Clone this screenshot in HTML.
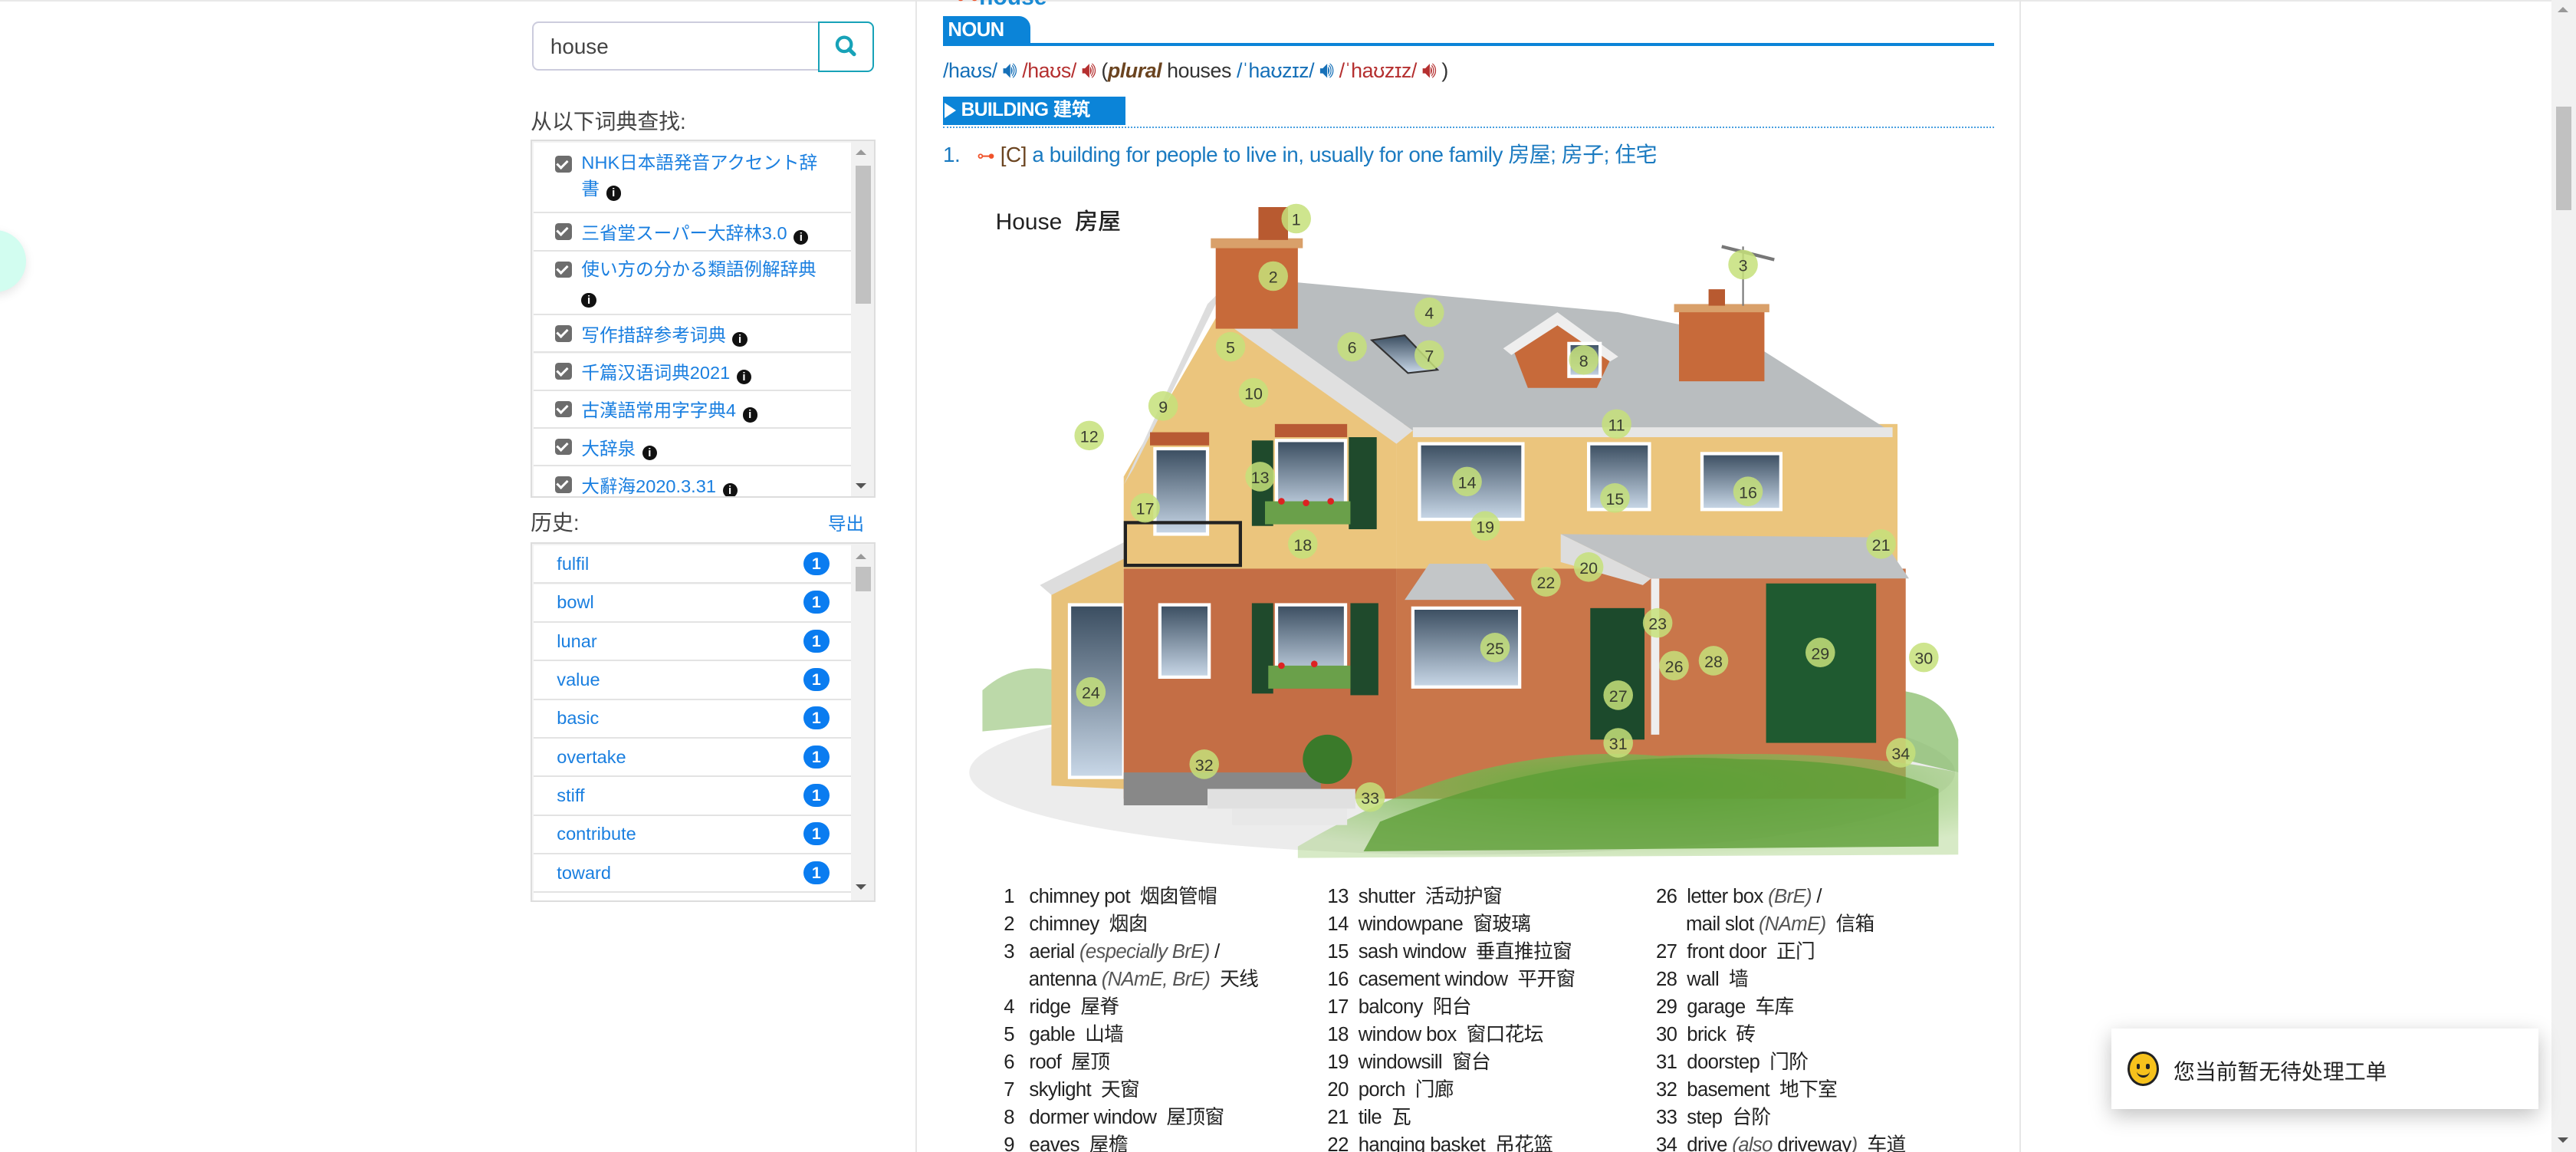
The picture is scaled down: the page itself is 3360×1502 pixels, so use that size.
<!DOCTYPE html>
<html><head><meta charset="utf-8">
<style>
html,body{margin:0;padding:0;background:#fff;overflow:hidden}
body{zoom:2.142857;width:1568px;height:701px;position:relative;font-family:"Liberation Sans","Noto Sans CJK SC",sans-serif;color:#333}
.a{position:absolute}
.box{position:absolute;border:1px solid #ddd;background:#f3f3f3}
.row{position:absolute;left:1px;width:193px;background:#fff;border-bottom:1px solid #e3e3e3;font-size:11px;color:#1a7fe0}
.cb{position:absolute;left:13px;width:10px;height:10px;background:#6d6d6d;border-radius:2px}
.cb:after{content:"";position:absolute;left:2.5px;top:1px;width:3px;height:5px;border:solid #fff;border-width:0 1.6px 1.6px 0;transform:rotate(45deg)}
.info{display:inline-block;width:9px;height:9px;border-radius:50%;background:#111;color:#fff;font-size:7px;line-height:9px;text-align:center;font-weight:bold;vertical-align:-1px;margin-left:4px}
.badge{position:absolute;left:164px;width:16px;height:14px;border-radius:8px;background:#0a7cf0;color:#fff;font-size:10px;font-weight:bold;text-align:center;line-height:14px}
.sb{position:absolute;width:14px;background:#f1f1f1}
.leg{position:absolute;font-size:12px;color:#222;letter-spacing:-0.3px;white-space:nowrap;line-height:16.8px}
.leg i{color:#555}
.spk{font-size:14px}
</style></head><body>
<div class="a" style="left:0;top:0;width:1553px;height:1px;background:#e8e8e8"></div>
<div class="a" style="left:-22px;top:140px;width:38px;height:38px;border-radius:50%;background:#d2fdf0;box-shadow:0 2px 6px rgba(0,0,0,.1)"></div>

<div class="a" style="left:324px;top:13px;width:174px;height:30px;border:1px solid #ccd;border-right:none;border-radius:4px 0 0 4px;box-sizing:border-box"></div>
<div class="a" style="left:335px;top:21px;font-size:13px;color:#444">house</div>
<div class="a" style="left:498px;top:13px;width:34px;height:31px;border:1px solid #17a2b8;border-radius:0 4px 4px 0;box-sizing:border-box">
<svg width="32" height="29" viewBox="0 0 32 29"><circle cx="15" cy="13" r="4.3" fill="none" stroke="#17a2b8" stroke-width="2"/><line x1="18" y1="16" x2="21" y2="19" stroke="#17a2b8" stroke-width="2.4" stroke-linecap="round"/></svg></div>
<div class="a" style="left:323px;top:64px;font-size:13px;color:#444">从以下词典查找:</div>

<div class="box" style="left:323px;top:85px;width:208px;height:216px;overflow:hidden">
 <div class="row" style="top:1px;height:42px"><div class="cb" style="top:8px"></div><div class="a" style="left:29px;top:4px;line-height:16px;width:150px">NHK日本語発音アクセント辞<br>書<span class="info">i</span></div></div>
 <div class="row" style="top:44px;height:22px"><div class="cb" style="top:6px"></div><div class="a" style="left:29px;top:3px">三省堂スーパー大辞林3.0<span class="info">i</span></div></div>
 <div class="row" style="top:67px;height:38px"><div class="cb" style="top:6px"></div><div class="a" style="left:29px;top:3px;line-height:16px">使い方の分かる類語例解辞典<br><span class="info" style="margin-left:0">i</span></div></div>
 <div class="row" style="top:106px;height:22px"><div class="cb" style="top:6px"></div><div class="a" style="left:29px;top:3px">写作措辞参考词典<span class="info">i</span></div></div>
 <div class="row" style="top:129px;height:22px"><div class="cb" style="top:6px"></div><div class="a" style="left:29px;top:3px">千篇汉语词典2021<span class="info">i</span></div></div>
 <div class="row" style="top:152px;height:22px"><div class="cb" style="top:6px"></div><div class="a" style="left:29px;top:3px">古漢語常用字字典4<span class="info">i</span></div></div>
 <div class="row" style="top:175px;height:22px"><div class="cb" style="top:6px"></div><div class="a" style="left:29px;top:3px">大辞泉<span class="info">i</span></div></div>
 <div class="row" style="top:198px;height:22px"><div class="cb" style="top:6px"></div><div class="a" style="left:29px;top:3px">大辭海2020.3.31<span class="info">i</span></div></div>
 <div class="sb" style="left:194px;top:0;height:216px"></div>
 <div class="a" style="left:197px;top:15px;width:9px;height:84px;background:#c1c1c1"></div>
 <div class="a" style="left:197px;top:5px;width:0;height:0;border:3.5px solid transparent;border-bottom-color:#999;border-top:0"></div>
 <div class="a" style="left:197px;top:208px;width:0;height:0;border:3.5px solid transparent;border-top-color:#555;border-bottom:0"></div>
</div>

<div class="a" style="left:323px;top:308px;font-size:13px;color:#444">历史:</div>
<div class="a" style="left:504px;top:310px;font-size:11px;color:#1a7fe0">导出</div>
<div class="box" style="left:323px;top:330px;width:208px;height:217px;overflow:hidden">
 <div class="row" style="top:1px;height:22.5px"><div class="a" style="left:14px;top:5px">fulfil</div><div class="badge" style="top:4px">1</div></div>
 <div class="row" style="top:24.5px;height:22.5px"><div class="a" style="left:14px;top:5px">bowl</div><div class="badge" style="top:4px">1</div></div>
 <div class="row" style="top:48px;height:22.5px"><div class="a" style="left:14px;top:5px">lunar</div><div class="badge" style="top:4px">1</div></div>
 <div class="row" style="top:71.5px;height:22.5px"><div class="a" style="left:14px;top:5px">value</div><div class="badge" style="top:4px">1</div></div>
 <div class="row" style="top:95px;height:22.5px"><div class="a" style="left:14px;top:5px">basic</div><div class="badge" style="top:4px">1</div></div>
 <div class="row" style="top:118.5px;height:22.5px"><div class="a" style="left:14px;top:5px">overtake</div><div class="badge" style="top:4px">1</div></div>
 <div class="row" style="top:142px;height:22.5px"><div class="a" style="left:14px;top:5px">stiff</div><div class="badge" style="top:4px">1</div></div>
 <div class="row" style="top:165.5px;height:22.5px"><div class="a" style="left:14px;top:5px">contribute</div><div class="badge" style="top:4px">1</div></div>
 <div class="row" style="top:189px;height:22.5px"><div class="a" style="left:14px;top:5px">toward</div><div class="badge" style="top:4px">1</div></div>
 <div class="row" style="top:212.5px;height:22.5px"></div>
 <div class="sb" style="left:194px;top:0;height:217px"></div>
 <div class="a" style="left:197px;top:14px;width:9px;height:15px;background:#c1c1c1"></div>
 <div class="a" style="left:197px;top:6px;width:0;height:0;border:3.5px solid transparent;border-bottom-color:#999;border-top:0"></div>
 <div class="a" style="left:197px;top:207px;width:0;height:0;border:3.5px solid transparent;border-top-color:#555;border-bottom:0"></div>
</div>

<div class="a" style="left:557px;top:0;width:1px;height:701px;background:#e6e6e6"></div>
<div class="a" style="left:1229px;top:0;width:1px;height:701px;background:#e6e6e6"></div>

<div class="a" style="left:582px;top:-10px;font-size:14px;font-weight:bold;color:#1a8ad4"><span style="color:#f0522a">⊶</span>house</div>
<div class="a" style="left:574px;top:10px;width:53px;height:17px;background:#0b84d8;border-radius:0 7px 0 0;color:#fff;font-weight:bold;font-size:12px;line-height:17px;padding-left:3px;box-sizing:border-box;letter-spacing:-.3px">NOUN</div>
<div class="a" style="left:574px;top:26px;width:640px;height:2px;background:#0b84d8"></div>
<div class="a" style="left:574px;top:35px;font-size:12.5px;white-space:nowrap;letter-spacing:-.2px">
<span style="color:#1670b8">/haʊs/</span> <span class="spk" style="color:#1670b8">🔊︎</span> <span style="color:#b53030">/haʊs/</span> <span class="spk" style="color:#b53030">🔊︎</span> (<b style="color:#6b4420"><i>plural</i></b> houses <span style="color:#1670b8">/ˈhaʊzɪz/</span> <span class="spk" style="color:#1670b8">🔊︎</span> <span style="color:#b53030">/ˈhaʊzɪz/</span> <span class="spk" style="color:#b53030">🔊︎</span> )</div>
<div class="a" style="left:574px;top:59px;width:111px;height:17px;background:#0b84d8;color:#fff;font-weight:bold;font-size:11.5px;line-height:17px;white-space:nowrap;letter-spacing:-.3px"><span style="display:inline-block;width:0;height:0;border:5px solid transparent;border-left:7px solid #fff;border-right:0;vertical-align:-1px;margin:0 3px 0 1px"></span>BUILDING 建筑</div>
<div class="a" style="left:574px;top:77px;width:640px;height:0;border-top:1px dotted #4aa0e0"></div>
<div class="a" style="left:574px;top:84px;font-size:13px;color:#1a7ac0;white-space:nowrap;letter-spacing:-.2px">1.&nbsp;&nbsp; <span style="color:#f0522a;font-size:11px">⊶</span> <span style="color:#6b4420">[C]</span> a building for people to live in, usually for one family 房屋; 房子; 住宅</div>

<div class="a" style="left:606px;top:123px;font-size:14px;color:#222;font-weight:500">House&nbsp; 房屋</div>
<svg class="a" style="left:0;top:0" width="1568" height="701" viewBox="0 0 1568 701">
<defs><linearGradient id="gl" x1="0" y1="0" x2="0" y2="1"><stop offset="0" stop-color="#3a4d60"/><stop offset="1" stop-color="#c9d8e8"/></linearGradient>
<radialGradient id="gr" cx=".5" cy=".3" r=".7"><stop offset="0" stop-color="#5ea83a"/><stop offset="1" stop-color="#9bcb70" stop-opacity=".4"/></radialGradient></defs>
<ellipse cx="890" cy="470" rx="300" ry="50" fill="#ececec"/>
<path d="M598 420 Q620 400 650 410 L650 440 L598 445Z" fill="#8fc070" opacity=".6"/>
<path d="M1150 420 Q1185 420 1192 450 L1192 470 L1150 460Z" fill="#7fb860" opacity=".7"/>
<polygon points="640,355 684,335 684,480 640,478" fill="#e8c27a"/>
<polygon points="633,356 684,330 684,340 640,362" fill="#ddd"/>
<rect x="651" y="368" width="33" height="105" fill="url(#gl)" stroke="#fff" stroke-width="2"/>
<polygon points="684,290 745,185 850,262 850,348 684,348" fill="#ebc57d"/>
<rect x="684" y="346" width="166" height="140" fill="#c46e45"/>
<rect x="684" y="470" width="120" height="20" fill="#888"/>
<rect x="850" y="258" width="305" height="90" fill="#ebc57d"/>
<rect x="850" y="346" width="310" height="140" fill="#c9764a"/>
<polygon points="745,180 770,170 985,190 1060,205 1150,262 860,262" fill="#b9bdbf"/>
<polygon points="745,180 860,262 850,270 740,192" fill="#e0e0e0"/>
<polygon points="735,185 745,175 690,285 684,295" fill="#ddd"/>
<rect x="860" y="260" width="292" height="6" fill="#e6e6e6"/>
<rect x="740" y="148" width="50" height="52" fill="#c76a3a"/><rect x="737" y="145" width="56" height="6" fill="#d9a06a"/>
<rect x="766" y="126" width="18" height="20" fill="#b85a30"/>
<rect x="1022" y="188" width="52" height="44" fill="#c76a3a"/><rect x="1019" y="185" width="58" height="5" fill="#d9a06a"/>
<rect x="1040" y="176" width="10" height="10" fill="#b85a30"/>
<line x1="1061" y1="150" x2="1061" y2="186" stroke="#777"/><line x1="1048" y1="150" x2="1080" y2="158" stroke="#777" stroke-width="2"/>
<polygon points="920,210 948,193 982,215 972,236 930,236" fill="#c76a3a"/>
<polygon points="915,212 948,190 985,217 980,220 948,198 920,216" fill="#eee"/>
<rect x="955" y="209" width="19" height="20" fill="url(#gl)" stroke="#fff" stroke-width="2"/>
<polygon points="835,207 855,204 875,225 857,227" fill="url(#gl)" stroke="#333"/>
<rect x="703" y="273" width="32" height="52" fill="url(#gl)" stroke="#fff" stroke-width="2"/>
<rect x="777" y="268" width="42" height="44" fill="url(#gl)" stroke="#fff" stroke-width="2"/>
<rect x="762" y="268" width="13" height="52" fill="#1f4a2c"/><rect x="821" y="266" width="17" height="56" fill="#1f4a2c"/>
<rect x="864" y="270" width="63" height="46" fill="url(#gl)" stroke="#fff" stroke-width="2"/>
<rect x="967" y="270" width="37" height="40" fill="url(#gl)" stroke="#fff" stroke-width="2"/>
<rect x="1036" y="276" width="48" height="34" fill="url(#gl)" stroke="#fff" stroke-width="2"/>
<rect x="700" y="263" width="36" height="8" fill="#b85a34"/><rect x="776" y="258" width="44" height="8" fill="#b85a34"/>
<rect x="685" y="318" width="70" height="26" fill="none" stroke="#222" stroke-width="2"/>
<rect x="770" y="305" width="52" height="14" fill="#6aa04a"/><circle cx="780" cy="305" r="2" fill="#d22"/><circle cx="795" cy="306" r="2" fill="#d22"/><circle cx="810" cy="305" r="2" fill="#d22"/>
<polygon points="950,325 1145,327 1162,352 1005,352" fill="#bfc2c4"/>
<polygon points="950,325 1005,352 1000,356 950,342" fill="#ddd"/>
<polygon points="855,365 870,343 905,343 922,365" fill="#c3c6c8"/>
<rect x="706" y="368" width="30" height="44" fill="url(#gl)" stroke="#fff" stroke-width="2"/>
<rect x="777" y="368" width="42" height="45" fill="url(#gl)" stroke="#fff" stroke-width="2"/>
<rect x="762" y="367" width="13" height="55" fill="#1f4a2c"/><rect x="822" y="367" width="17" height="56" fill="#1f4a2c"/>
<rect x="772" y="405" width="50" height="14" fill="#6aa04a"/><circle cx="780" cy="405" r="2" fill="#d22"/><circle cx="800" cy="404" r="2" fill="#d22"/>
<rect x="860" y="370" width="65" height="48" fill="url(#gl)" stroke="#fff" stroke-width="2"/>
<rect x="968" y="370" width="33" height="80" fill="#1c4a2c"/>
<rect x="1075" y="355" width="67" height="97" fill="#1f5a30"/>
<rect x="1005" y="352" width="5" height="95" fill="#eee"/>
<path d="M790 515 Q900 450 1010 460 Q1120 455 1192 470 L1192 520 L790 522Z" fill="url(#gr)"/>
<path d="M840 500 Q950 455 1060 462 Q1140 462 1180 480 L1180 515 L830 518Z" fill="#5d9e36" opacity=".8"/>
<rect x="735" y="480" width="90" height="12" fill="#e0e0e0"/><rect x="750" y="492" width="70" height="10" fill="#e8e8e8"/>
<circle cx="808" cy="462" r="15" fill="#3a7a2a"/>
<g fill="#c6e07a" fill-opacity=".85" font-family="Liberation Sans,sans-serif" font-size="10" text-anchor="middle">
<circle cx="789" cy="133" r="9"/><circle cx="775" cy="168" r="9"/><circle cx="1061" cy="161" r="9"/><circle cx="870" cy="190" r="9"/><circle cx="749" cy="211" r="9"/><circle cx="823" cy="211" r="9"/><circle cx="870" cy="216" r="9"/><circle cx="964" cy="219" r="9"/><circle cx="708" cy="247" r="9"/><circle cx="763" cy="239" r="9"/><circle cx="984" cy="258" r="9"/><circle cx="663" cy="265" r="9"/><circle cx="767" cy="290" r="9"/><circle cx="893" cy="293" r="9"/><circle cx="983" cy="303" r="9"/><circle cx="1064" cy="299" r="9"/><circle cx="697" cy="309" r="9"/><circle cx="793" cy="331" r="9"/><circle cx="904" cy="320" r="9"/><circle cx="967" cy="345" r="9"/><circle cx="1145" cy="331" r="9"/><circle cx="941" cy="354" r="9"/><circle cx="1009" cy="379" r="9"/><circle cx="664" cy="421" r="9"/><circle cx="910" cy="394" r="9"/><circle cx="1019" cy="405" r="9"/><circle cx="985" cy="423" r="9"/><circle cx="1043" cy="402" r="9"/><circle cx="1108" cy="397" r="9"/><circle cx="1171" cy="400" r="9"/><circle cx="985" cy="452" r="9"/><circle cx="733" cy="465" r="9"/><circle cx="834" cy="485" r="9"/><circle cx="1157" cy="458" r="9"/>
<g fill="#222"><text x="789" y="137">1</text><text x="775" y="172">2</text><text x="1061" y="165">3</text><text x="870" y="194">4</text><text x="749" y="215">5</text><text x="823" y="215">6</text><text x="870" y="220">7</text><text x="964" y="223">8</text><text x="708" y="251">9</text><text x="763" y="243">10</text><text x="984" y="262">11</text><text x="663" y="269">12</text><text x="767" y="294">13</text><text x="893" y="297">14</text><text x="983" y="307">15</text><text x="1064" y="303">16</text><text x="697" y="313">17</text><text x="793" y="335">18</text><text x="904" y="324">19</text><text x="967" y="349">20</text><text x="1145" y="335">21</text><text x="941" y="358">22</text><text x="1009" y="383">23</text><text x="664" y="425">24</text><text x="910" y="398">25</text><text x="1019" y="409">26</text><text x="985" y="427">27</text><text x="1043" y="406">28</text><text x="1108" y="401">29</text><text x="1171" y="404">30</text><text x="985" y="456">31</text><text x="733" y="469">32</text><text x="834" y="489">33</text><text x="1157" y="462">34</text></g>
</g>
</svg>

<div class="leg" style="left:611px;top:537px">
1&nbsp;&nbsp; chimney pot&nbsp; 烟囱管帽<br>2&nbsp;&nbsp; chimney&nbsp; 烟囱<br>3&nbsp;&nbsp; aerial <i>(especially BrE)</i> /<br>&nbsp;&nbsp;&nbsp;&nbsp; antenna <i>(NAmE, BrE)</i>&nbsp; 天线<br>4&nbsp;&nbsp; ridge&nbsp; 屋脊<br>5&nbsp;&nbsp; gable&nbsp; 山墙<br>6&nbsp;&nbsp; roof&nbsp; 屋顶<br>7&nbsp;&nbsp; skylight&nbsp; 天窗<br>8&nbsp;&nbsp; dormer window&nbsp; 屋顶窗<br>9&nbsp;&nbsp; eaves&nbsp; 屋檐</div>
<div class="leg" style="left:808px;top:537px">
13&nbsp; shutter&nbsp; 活动护窗<br>14&nbsp; windowpane&nbsp; 窗玻璃<br>15&nbsp; sash window&nbsp; 垂直推拉窗<br>16&nbsp; casement window&nbsp; 平开窗<br>17&nbsp; balcony&nbsp; 阳台<br>18&nbsp; window box&nbsp; 窗口花坛<br>19&nbsp; windowsill&nbsp; 窗台<br>20&nbsp; porch&nbsp; 门廊<br>21&nbsp; tile&nbsp; 瓦<br>22&nbsp; hanging basket&nbsp; 吊花篮</div>
<div class="leg" style="left:1008px;top:537px">
26&nbsp; letter box <i>(BrE)</i> /<br>&nbsp;&nbsp;&nbsp;&nbsp;&nbsp; mail slot <i>(NAmE)</i>&nbsp; 信箱<br>27&nbsp; front door&nbsp; 正门<br>28&nbsp; wall&nbsp; 墙<br>29&nbsp; garage&nbsp; 车库<br>30&nbsp; brick&nbsp; 砖<br>31&nbsp; doorstep&nbsp; 门阶<br>32&nbsp; basement&nbsp; 地下室<br>33&nbsp; step&nbsp; 台阶<br>34&nbsp; drive <i>(also</i> driveway<i>)</i>&nbsp; 车道</div>

<div class="a" style="left:1553px;top:0;width:15px;height:701px;background:#f1f1f1"></div>
<div class="a" style="left:1556px;top:65px;width:9px;height:63px;background:#c1c1c1"></div>
<div class="a" style="left:1557px;top:4px;width:0;height:0;border:3.5px solid transparent;border-bottom-color:#999;border-top:0"></div>
<div class="a" style="left:1557px;top:692px;width:0;height:0;border:3.5px solid transparent;border-top-color:#555;border-bottom:0"></div>

<div class="a" style="left:1285px;top:626px;width:260px;height:49px;background:#fff;box-shadow:0 4px 12px rgba(0,0,0,.25)">
<div class="a" style="left:10px;top:14px;width:19px;height:21px;border-radius:50%;background:#f7c21c;border:1.5px solid #222;box-sizing:border-box"><div class="a" style="left:4px;top:6px;width:2px;height:3px;background:#222;border-radius:1px"></div><div class="a" style="left:10px;top:6px;width:2px;height:3px;background:#222;border-radius:1px"></div><div class="a" style="left:4px;top:9px;width:8px;height:4px;border:solid #222;border-width:0 0 1.5px 0;border-radius:0 0 5px 5px"></div></div>
<div class="a" style="left:38px;top:16px;font-size:13px;color:#222">您当前暂无待处理工单</div>
</div>
</body></html>
